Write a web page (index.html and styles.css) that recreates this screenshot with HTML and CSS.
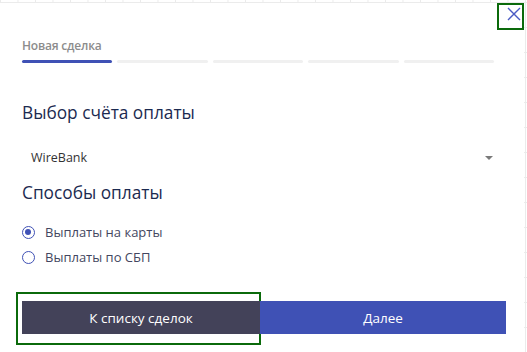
FILE: index.html
```html
<!DOCTYPE html>
<html lang="ru">
<head>
<meta charset="utf-8">
<link rel="stylesheet" href="styles.css">
</head>
<body>
<div class="dialog">
  <div class="close-wrap">
    <button class="close" aria-label="Закрыть">
      <svg width="14" height="14" viewBox="0 0 14 14"><path d="M1 1L13 13M13 1L1 13" stroke="#4a5bc4" stroke-width="1.4" fill="none"/></svg>
    </button>
  </div>
  <div class="content">
    <div class="step-title">Новая сделка</div>
    <div class="progress">
      <span class="seg active"></span>
      <span class="seg"></span>
      <span class="seg"></span>
      <span class="seg"></span>
      <span class="seg"></span>
    </div>
    <h2 class="heading first">Выбор счёта оплаты</h2>
    <div class="select">
      <span>WireBank</span>
      <span class="caret"></span>
    </div>
    <h2 class="heading">Способы оплаты</h2>
    <div class="radios">
      <label class="radio"><span class="dot checked"></span>Выплаты на карты</label>
      <label class="radio"><span class="dot"></span>Выплаты по СБП</label>
    </div>
    <div class="actions">
      <div class="focus-box">
        <button class="btn dark">К списку сделок</button>
      </div>
      <button class="btn primary">Далее</button>
    </div>
  </div>
</div>
</body>
</html>
```
FILE: styles.css
```css
html, body {
  margin: 0;
  padding: 0;
}
body {
  width: 527px;
  height: 352px;
  overflow: hidden;
  font-family: "Open Sans", "Noto Sans", sans-serif;
  background-color: #fff;
  background-image:
    linear-gradient(to right, #ebebeb 1px, transparent 1px),
    linear-gradient(to bottom, #ebebeb 1px, transparent 1px);
  background-size: 17.5px 25px;
  background-position: 0 2px;
  padding-top: 3px;
  box-sizing: border-box;
}
.dialog {
  width: 524px;
  height: 349px;
  background: #fff;
  position: relative;
}
.close-wrap {
  position: absolute;
  top: 0;
  right: 0;
  width: 27px;
  height: 27px;
  border: 2px solid #0b6a0b;
  box-sizing: border-box;
}
.close {
  border: 0;
  background: transparent;
  width: 100%;
  height: 100%;
  display: flex;
  justify-content: flex-end;
  align-items: flex-start;
  padding: 2px 1px 0 0;
  box-sizing: border-box;
}
.content {
  padding: 36px 0 0 22px;
}
.step-title {
  font-size: 12px;
  font-weight: 600;
  color: #8c8c8c;
  line-height: 14px;
  letter-spacing: -0.2px;
}
.progress {
  display: flex;
  gap: 5px;
  width: 472px;
  margin-top: 7px;
}
.seg {
  flex: 1;
  height: 3px;
  border-radius: 2px;
  background: #f0f0f0;
}
.seg.active {
  background: #3f51b5;
}
.heading {
  margin: 0;
  font-size: 17.3px;
  font-weight: 400;
  color: #1b2a50;
  line-height: 22px;
}
.heading.first {
  margin-top: 39px;
}
.select {
  display: flex;
  justify-content: space-between;
  align-items: center;
  width: 472px;
  margin-top: 26px;
  padding-left: 9px;
  box-sizing: border-box;
  font-size: 12.5px;
  color: #333;
  line-height: 16px;
}
.caret {
  width: 0;
  height: 0;
  border-left: 4px solid transparent;
  border-right: 4px solid transparent;
  border-top: 4px solid #7a7a7a;
  margin-right: 1px;
}
.select + .heading {
  margin-top: 16px;
}
.radios {
  display: flex;
  flex-direction: column;
  gap: 9px;
  margin-top: 20px;
}
.radio {
  display: flex;
  align-items: center;
  gap: 10px;
  font-size: 13px;
  color: #434660;
  line-height: 16px;
}
.dot {
  width: 13px;
  height: 13px;
  border: 1.5px solid #3f51b5;
  border-radius: 50%;
  box-sizing: border-box;
  position: relative;
}
.dot.checked::after {
  content: "";
  position: absolute;
  left: 2px;
  top: 2px;
  width: 6px;
  height: 6px;
  border-radius: 50%;
  background: #3f51b5;
}
.actions {
  display: flex;
  margin-top: 27px;
  margin-left: -6px;
  align-items: flex-start;
}
.focus-box {
  border: 2px solid #0b6a0b;
  padding: 7px 0 0 4px;
  width: 245px;
  height: 53px;
  box-sizing: border-box;
  display: flex;
  align-items: flex-start;
}
.btn {
  border: 0;
  height: 33px;
  font-family: inherit;
  font-size: 13.5px;
  color: #fff;
  padding: 0;
  cursor: pointer;
}
.btn.dark {
  width: 238px;
  flex: none;
  background: #434259;
}
.btn.primary {
  width: 246px;
  margin-top: 9px;
  margin-left: -1px;
  background: #3f51b5;
}
```
